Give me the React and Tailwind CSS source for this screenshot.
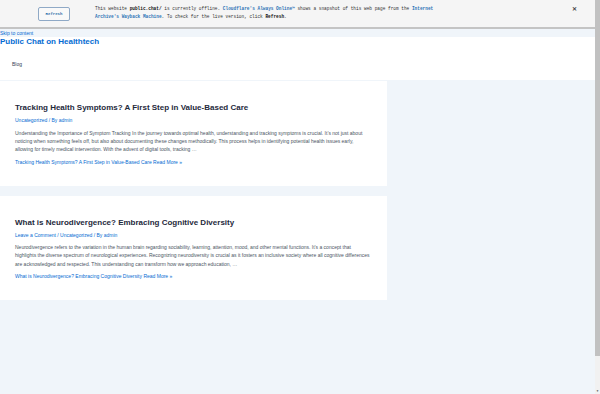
import React from "react";

const posts = [
  {
    title: "Tracking Health Symptoms? A First Step in Value-Based Care",
    meta: ["Uncategorized", " / By ", "admin"],
    excerpt:
      "Understanding the Importance of Symptom Tracking In the journey towards optimal health, understanding and tracking symptoms is crucial. It’s not just about noticing when something feels off, but also about documenting these changes methodically. This process helps in identifying potential health issues early, allowing for timely medical intervention. With the advent of digital tools, tracking …",
  },
  {
    title: "What is Neurodivergence? Embracing Cognitive Diversity",
    meta: ["Leave a Comment", " / ", "Uncategorized", " / By ", "admin"],
    excerpt:
      "Neurodivergence refers to the variation in the human brain regarding sociability, learning, attention, mood, and other mental functions. It’s a concept that highlights the diverse spectrum of neurological experiences. Recognizing neurodiversity is crucial as it fosters an inclusive society where all cognitive differences are acknowledged and respected. This understanding can transform how we approach education, …",
  },
];

function Banner() {
  return (
    <div className="h-[29px] shrink-0 bg-[#f5f5f5] border-b-2 border-[#c4c4c4] flex items-start font-['Liberation_Mono',monospace] relative">
      <button className="ml-[38px] mt-[7px] w-[32px] h-[14px] border border-[#8fa9c6] rounded-[2px] bg-[#f9f9f9] text-[4px] font-bold text-[#2c6fa8] leading-none">
        Refresh
      </button>
      <div className="ml-[25px] mt-[5px] text-[4.44px] leading-[8px] text-[#333] w-[340px]">
        <div className="whitespace-nowrap">
          This website <b className="text-[#111]">public.chat/</b> is currently offline.{" "}
          <span className="text-[#2f74b5] font-bold">Cloudflare's Always Online™</span> shows a snapshot of this web
          page from the <span className="text-[#2f74b5] font-bold">Internet</span>
        </div>
        <div className="whitespace-nowrap">
          <span className="text-[#2f74b5] font-bold">Archive's Wayback Machine</span>. To check for the live version, click{" "}
          <b className="text-[#111]">Refresh</b>.
        </div>
      </div>
      <span className="absolute left-[572px] top-[6px] text-[6px] font-bold text-[#444] leading-none font-['Liberation_Sans',sans-serif]">
        ✕
      </span>
    </div>
  );
}

function PostCard({ post }) {
  return (
    <article className="w-[387px] bg-white pl-[15px] pt-[21px] pb-[20px] font-['Liberation_Sans',sans-serif]">
      <div className="w-[357px]">
        <h2 className="text-[8px] leading-[11px] font-bold text-[#1e293b] whitespace-nowrap">{post.title}</h2>
        <div className="mt-[3px] text-[5px] leading-[8px] text-[#046bd2]">
          {post.meta.map((m, i) => (
            <span key={i}>{m}</span>
          ))}
        </div>
        <p className="mt-[4.5px] text-[5px] leading-[8.2px] text-[#4b5563]">{post.excerpt}</p>
        <a className="block mt-[4.5px] text-[5px] leading-[8px] text-[#046bd2]">
          {post.title} Read More »
        </a>
      </div>
    </article>
  );
}

export default function App() {
  return (
    <div className="flex w-[600px] h-[394px] overflow-hidden bg-[#f0f5fa]">
      <div className="w-[595px] flex flex-col">
        <Banner />
        <div className="h-[8px] flex items-center font-['Liberation_Sans',sans-serif] text-[5px] leading-none text-[#046bd2]">
          Skip to content
        </div>
        <header className="h-[43px] bg-white font-['Liberation_Sans',sans-serif]">
          <div className="text-[8px] leading-[10px] font-bold text-[#046bd2]">Public Chat on Healthtech</div>
          <div className="mt-[13px] ml-[12px] text-[5px] leading-[8px] text-[#334155]">Blog</div>
        </header>
        <main className="pt-[1px] flex flex-col gap-[10px]">
          {posts.map((p) => (
            <PostCard key={p.title} post={p} />
          ))}
        </main>
      </div>
      <div className="w-[5px] bg-[#f1f1f1] flex flex-col">
        <div className="h-[356px] bg-[#c1c1c1]" />
        <div className="flex-1 flex items-end justify-center pb-[1px]">
          <span className="text-[3px] leading-none text-[#505050]">▼</span>
        </div>
      </div>
    </div>
  );
}
